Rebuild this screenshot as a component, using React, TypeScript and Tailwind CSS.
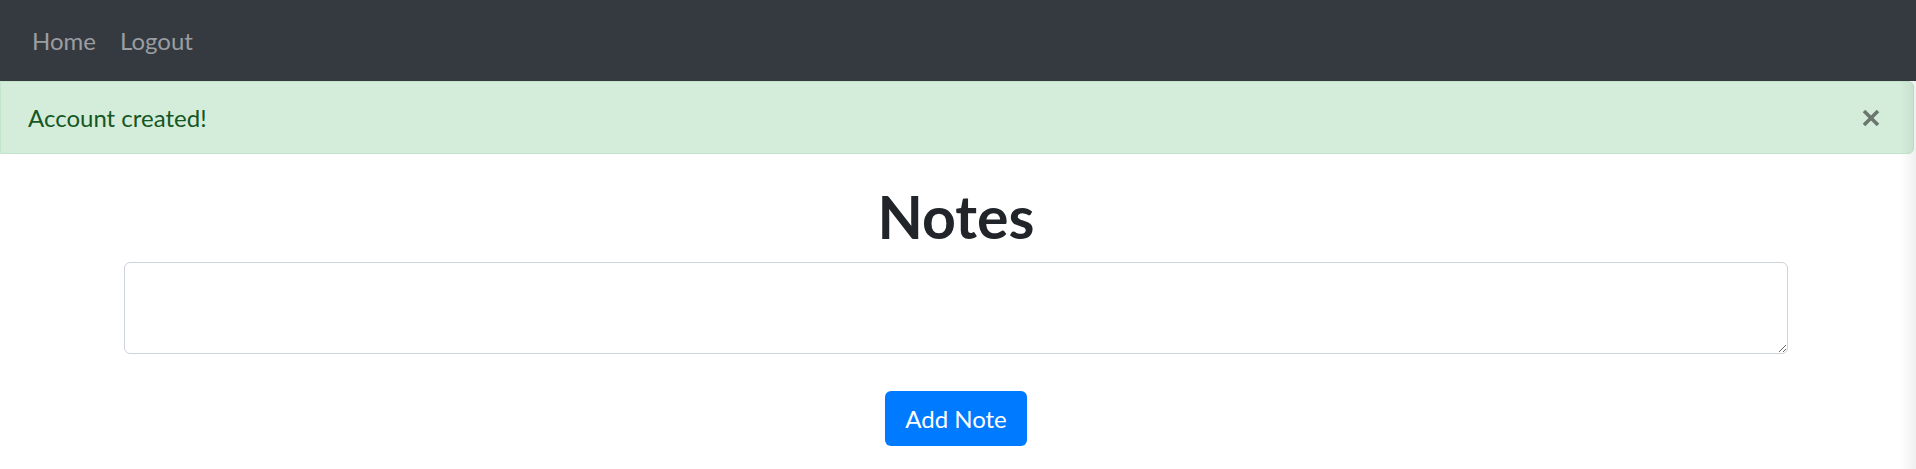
export default function App() {
  return (
    <div className="relative min-h-[469px] bg-white font-['Lato','Noto_Sans',sans-serif]">
      {/* Navbar */}
      <nav className="flex h-[81px] items-center gap-[24px] bg-[#343a40] px-[32px] text-[24px] text-[#9a9da1]">
        <a href="#">Home</a>
        <a href="#">Logout</a>
      </nav>

      {/* Flash message */}
      <div className="mr-[2px] flex h-[73px] items-center justify-between rounded-r-[6px] border border-[#c3e6cb] bg-[#d4edda] pl-[27px] pr-[33px] text-[24px] text-[#155724]">
        <span>Account created!</span>
        <button type="button" aria-label="Close" className="text-[#6b776e]">
          <svg width="18" height="18" viewBox="0 0 18 18">
            <path d="M2 2 L16 16 M16 2 L2 16" stroke="currentColor" strokeWidth="3.6" />
          </svg>
        </button>
      </div>

      {/* Notes */}
      <div className="flex flex-col items-center px-[124px] pr-[128px]">
        <h1 className="mt-[28px] text-[59px] font-bold leading-[70px] text-[#212529]">Notes</h1>
        <textarea className="mt-[10px] h-[92px] w-full rounded-[6px] border border-[#ced4da] p-[9px] text-[23px]" />
        <button type="button" className="mt-[37px] h-[55px] rounded-[6px] bg-[#007bff] px-[20px] text-[24px] text-white">
          Add Note
        </button>
      </div>

      {/* scrollbar shade */}
      <div className="pointer-events-none absolute right-0 top-[81px] h-[388px] w-[16px] bg-gradient-to-r from-transparent to-[#00000010]" />
    </div>
  );
}
